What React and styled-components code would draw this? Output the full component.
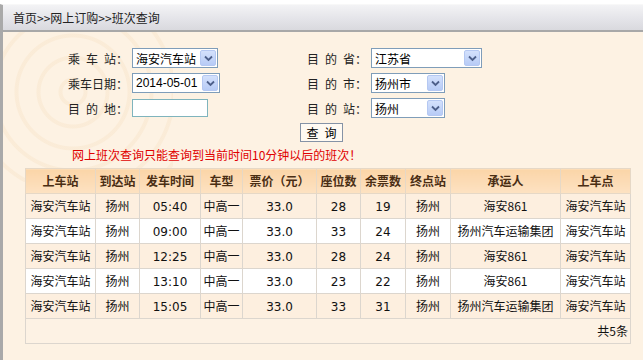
import styled, { createGlobalStyle } from "styled-components";

const GlobalStyle = createGlobalStyle`
  html, body {
    margin: 0;
    padding: 0;
    background: #ffffff;
  }
  body {
    width: 643px;
    height: 360px;
    overflow: hidden;
    font-family: "Noto Sans CJK SC", "DejaVu Sans", sans-serif;
    font-size: 12px;
    color: #111;
  }
`;

const rows = [
  { time: "05:40", seats: 28, left: 19, carrier: "海安861" },
  { time: "09:00", seats: 33, left: 24, carrier: "扬州汽车运输集团" },
  { time: "12:25", seats: 28, left: 24, carrier: "海安861" },
  { time: "13:10", seats: 23, left: 22, carrier: "海安861" },
  { time: "15:05", seats: 33, left: 31, carrier: "扬州汽车运输集团" },
];

const columns = [
  { title: "上车站", width: 70 },
  { title: "到达站", width: 44 },
  { title: "发车时间", width: 61 },
  { title: "车型", width: 42 },
  { title: "票价（元）", width: 74 },
  { title: "座位数", width: 44 },
  { title: "余票数", width: 45 },
  { title: "终点站", width: 45 },
  { title: "承运人", width: 110 },
  { title: "上车点", width: 70 },
];

const Chevron = () => (
  <svg width="9" height="7" viewBox="0 0 9 7">
    <path d="M1 1.5 L4.5 5 L8 1.5" fill="none" stroke="#4d5f8a" strokeWidth="1.8" />
  </svg>
);

const DropDown = ({ width, value, mono }) => (
  <SelectBox $width={width}>
    <SelectValue $mono={mono}>{value}</SelectValue>
    <ArrowBtn>
      <Chevron />
    </ArrowBtn>
  </SelectBox>
);

const App = () => {
  return (
    <Page>
      <GlobalStyle />
      <Breadcrumb>首页&gt;&gt;网上订购&gt;&gt;班次查询</Breadcrumb>
      <Content>
        <SearchForm>
          <Column>
            <Field>
              <Label $width={60}>乘&ensp;车&ensp;站：</Label>
              <DropDown width={86} value="海安汽车站" />
            </Field>
            <Field>
              <Label $width={60}>乘车日期：</Label>
              <DropDown width={88} value="2014-05-01" mono />
            </Field>
            <Field>
              <Label $width={60}>目&ensp;的&ensp;地：</Label>
              <TextInput />
            </Field>
          </Column>
          <Column>
            <Field>
              <Label $width={61}>目&ensp;的&ensp;省：</Label>
              <DropDown width={111} value="江苏省" />
            </Field>
            <Field>
              <Label $width={61}>目&ensp;的&ensp;市：</Label>
              <DropDown width={74} value="扬州市" />
            </Field>
            <Field>
              <Label $width={61}>目&ensp;的&ensp;站：</Label>
              <DropDown width={74} value="扬州" />
            </Field>
            <QueryButton>查&ensp;询</QueryButton>
          </Column>
        </SearchForm>
        <Notice>网上班次查询只能查询到当前时间10分钟以后的班次！</Notice>
        <ScheduleTable>
          <colgroup>
            {columns.map((c) => (
              <col key={c.title} style={{ width: c.width }} />
            ))}
          </colgroup>
          <thead>
            <tr>
              {columns.map((c) => (
                <Th key={c.title}>{c.title}</Th>
              ))}
            </tr>
          </thead>
          <tbody>
            {rows.map((r, i) => (
              <Row key={r.time} $odd={i % 2 === 0}>
                <Td>海安汽车站</Td>
                <Td>扬州</Td>
                <Td $num>{r.time}</Td>
                <Td>中高一</Td>
                <Td $num>33.0</Td>
                <Td $num>{r.seats}</Td>
                <Td $num>{r.left}</Td>
                <Td>扬州</Td>
                <Td>{r.carrier}</Td>
                <Td>海安汽车站</Td>
              </Row>
            ))}
            <FooterRow>
              <FooterCell colSpan={10}>共5条</FooterCell>
            </FooterRow>
          </tbody>
        </ScheduleTable>
      </Content>
    </Page>
  );
};

export default App;

const Page = styled.div`
  width: 643px;
  height: 360px;
  padding-top: 4px;
  box-sizing: border-box;
  display: flex;
  flex-direction: column;
`;

const Breadcrumb = styled.div`
  height: 25px;
  line-height: 25px;
  padding-left: 10px;
  border-left: 3px solid #a9a9a9;
  border-top: 1px solid #f8f8f8;
  border-bottom: 2px solid #a8a8a8;
  background: linear-gradient(#f3f3f5, #e3e3e8 60%, #d9d9de);
  color: #222;
  font-size: 12px;
  white-space: nowrap;
`;

const Content = styled.div`
  flex: 1;
  border-left: 3px solid #a9a9a9;
  background-color: #fdf2e3;
  background-image: repeating-radial-gradient(
    circle at 70px 60px,
    rgba(248, 228, 200, 0) 0 10px,
    rgba(246, 224, 194, 0.35) 11px 14px,
    rgba(248, 228, 200, 0) 15px 22px
  );
  background-size: 170px 150px;
  background-repeat: no-repeat;
  padding: 16px 0 0 22px;
`;

const SearchForm = styled.div`
  display: grid;
  grid-template-columns: 238px auto;
  padding-left: 43px;
`;

const Column = styled.div`
  display: flex;
  flex-direction: column;
  gap: 5px;
`;

const Field = styled.div`
  display: flex;
  align-items: center;
  height: 20px;
  gap: 4px;
`;

const Label = styled.span`
  width: ${(p) => p.$width}px;
  text-align: right;
  white-space: nowrap;
  color: #222;
  font-size: 12px;
`;

const SelectBox = styled.div`
  width: ${(p) => p.$width}px;
  height: 20px;
  box-sizing: border-box;
  border: 1px solid #7f9db9;
  background: #fff;
  display: flex;
  align-items: center;
  justify-content: space-between;
  padding: 0 1px 0 3px;
`;

const SelectValue = styled.span`
  font-family: ${(p) =>
    p.$mono
      ? '"Liberation Sans", Arial, sans-serif'
      : '"Noto Sans CJK SC", sans-serif'};
  font-size: 12px;
  color: #000;
  white-space: nowrap;
`;

const ArrowBtn = styled.span`
  width: 16px;
  height: 16px;
  box-sizing: border-box;
  border: 1px solid #b5c8f2;
  border-radius: 2px;
  background: linear-gradient(#d4e1fc, #b7cbf6);
  display: flex;
  align-items: center;
  justify-content: center;
`;

const TextInput = styled.input`
  width: 76px;
  height: 18px;
  box-sizing: border-box;
  border: 1px solid #7fb4bd;
  background: #fff;
  margin: 0;
  padding: 0 2px;
`;

const QueryButton = styled.button`
  align-self: flex-start;
  margin-left: -6px;
  width: 43px;
  height: 19px;
  padding: 0;
  border: 1px solid #8593a6;
  background: #fffaf2;
  font-family: "Noto Sans CJK SC", sans-serif;
  font-size: 12px;
  color: #000;
  line-height: 17px;
`;

const Notice = styled.div`
  margin: 5px 0 0 47px;
  color: #e00000;
  font-size: 12px;
  line-height: 16px;
`;

const ScheduleTable = styled.table`
  margin-top: 5px;
  width: 605px;
  table-layout: fixed;
  border-collapse: collapse;
  font-size: 12px;
`;

const Th = styled.th`
  height: 25px;
  box-sizing: border-box;
  padding: 0;
  line-height: 16px;
  border: 1px solid #e6d8c6;
  background: linear-gradient(#fbd5a8, #fde2c2);
  color: #4a2e14;
  font-weight: bold;
  text-align: center;
  white-space: nowrap;
  overflow: hidden;
`;

const Row = styled.tr`
  background: ${(p) => (p.$odd ? "#fdefdf" : "#ffffff")};
`;

const Td = styled.td`
  height: 25px;
  box-sizing: border-box;
  padding: 0;
  line-height: 16px;
  border: 1px solid #dcd6ce;
  text-align: center;
  white-space: nowrap;
  overflow: hidden;
  color: #111;
  font-family: ${(p) =>
    p.$num ? '"DejaVu Sans", Verdana, sans-serif' : '"Noto Sans CJK SC", sans-serif'};
  font-size: 12px;
  vertical-align: ${(p) => (p.$num ? "bottom" : "middle")};
  padding-bottom: ${(p) => (p.$num ? "3px" : "1px")};
`;

const FooterRow = styled.tr`
  background: #fdf2e4;
`;

const FooterCell = styled.td`
  height: 25px;
  box-sizing: border-box;
  padding: 0 2px 0 0;
  line-height: 16px;
  border: 1px solid #dcd6ce;
  text-align: right;
`;
